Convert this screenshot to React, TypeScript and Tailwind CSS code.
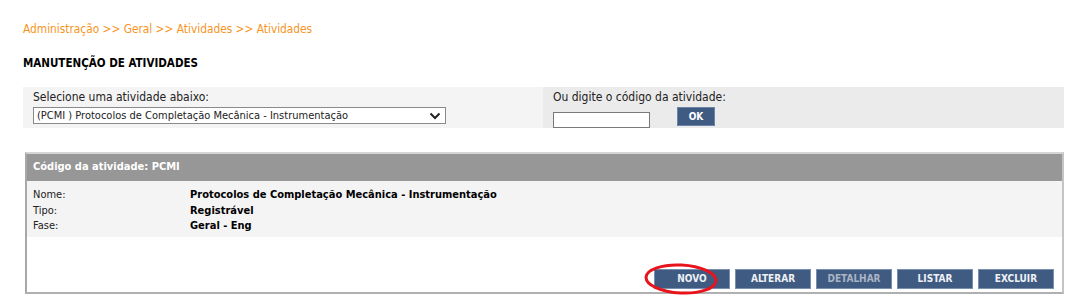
import React from 'react';

const font = { fontFamily: '"DejaVu Sans Condensed", "DejaVu Sans", Verdana, sans-serif' };

const buttons = ['NOVO', 'ALTERAR', 'DETALHAR', 'LISTAR', 'EXCLUIR'];

const App: React.FC = () => {
  return (
    <div className="w-[1072px] h-[306px] bg-white pl-[23px] pt-[22px]" style={font}>
      {/* Breadcrumb */}
      <div className="text-[11.8px] leading-[14px] text-[#f7941e]">
        Administração &gt;&gt; Geral &gt;&gt; Atividades &gt;&gt; Atividades
      </div>

      {/* Title */}
      <h1 className="mt-[20px] text-[11.5px] leading-[14px] font-bold text-black">MANUTENÇÃO DE ATIVIDADES</h1>

      {/* Filter panel */}
      <div className="mt-[17px] w-[1041px] h-[41px] flex">
        <div className="w-[520px] bg-[#f4f4f4] pl-[10px] pt-[3px]">
          <div className="text-[12px] leading-[15px] text-[#222]">Selecione uma atividade abaixo:</div>
          <div className="mt-[2px] w-[413px] h-[17px] border border-[#8a8a8a] bg-white flex items-center justify-between pl-[3px] pr-[4px]">
            <span className="text-[11px] leading-[13px] text-[#222]">(PCMI ) Protocolos de Completação Mecânica - Instrumentação</span>
            <svg width="12" height="8" viewBox="0 0 12 8">
              <path d="M1.5 1.5 L6 6 L10.5 1.5" fill="none" stroke="#222" strokeWidth="2" />
            </svg>
          </div>
        </div>
        <div className="flex-1 bg-[#ebebeb] pl-[10px] pt-[3px]">
          <div className="text-[12px] leading-[15px] text-[#222]">Ou digite o código da atividade:</div>
          <div className="flex items-start gap-[27px]">
            <div className="mt-[7px] w-[97px] h-[16px] border border-[#7a7a7a] bg-white" />
            <button className="mt-[2px] w-[38px] h-[19px] bg-[#3f5b82] border border-[#6d84a6] text-white text-[10px] font-bold leading-none">
              OK
            </button>
          </div>
        </div>
      </div>

      {/* Details box */}
      <div className="mt-[24px] ml-[2px] w-[1039px] h-[142px] border-2 border-t-[#d6d6d6] border-l-[#a8a8a8] border-r-[#c4c4c4] border-b-[#b0b0b0] bg-white flex flex-col">
        <div className="h-[27px] bg-[#979797] flex items-center pl-[6px]">
          <span className="text-[11px] font-bold text-white">Código da atividade: PCMI</span>
        </div>
        <div className="h-[56px] bg-[#f4f4f4] pl-[6px] pt-[6px] text-[11px] leading-[15.5px] text-[#222]">
          {[
            ['Nome:', 'Protocolos de Completação Mecânica - Instrumentação'],
            ['Tipo:', 'Registrável'],
            ['Fase:', 'Geral - Eng'],
          ].map(([label, value]) => (
            <div key={label} className="flex">
              <span className="w-[157px]">{label}</span>
              <span className="font-bold text-black">{value}</span>
            </div>
          ))}
        </div>
        <div className="flex-1 flex items-end justify-end gap-[5px] pr-[8px] pb-[3px]">
          {buttons.map((b) => (
            <div key={b} className="relative">
              <button
                className={`w-[76px] h-[20px] bg-[#3f5b82] border border-[#7890b0] text-[10px] font-bold leading-none ${
                  b === 'DETALHAR' ? 'text-[#aab4c4]' : 'text-[#eef1f5]'
                }`}
              >
                {b}
              </button>
              {b === 'NOVO' && (
                <svg className="absolute left-[-10px] top-[-2px] pointer-events-none" width="76" height="32" viewBox="0 0 76 32">
                  <ellipse cx="37" cy="16" rx="35" ry="14" fill="none" stroke="#e8141c" strokeWidth="3" transform="rotate(3 37 16)" />
                </svg>
              )}
            </div>
          ))}
        </div>
      </div>
    </div>
  );
};

export default App;
